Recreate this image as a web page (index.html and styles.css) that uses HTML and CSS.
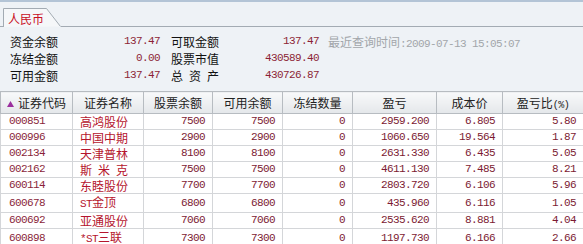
FILE: index.html
```html
<!DOCTYPE html>
<html lang="zh-CN">
<head>
<meta charset="utf-8">
<link rel="stylesheet" href="styles.css">
</head>
<body>
<div class="page">
  <div class="tabbar">
    <div class="tab-lead"></div>
    <div class="tab">
      <svg class="tab-shape" width="58" height="19" viewBox="0 0 58 19"><path d="M0.5 19 V0.5 H43.5 L57.5 18.5" fill="#f5f7f9" stroke="#a3abb3" stroke-width="1"/></svg>
      <span class="tab-label">人民币</span>
    </div>
    <div class="tab-fill"></div>
  </div>

  <div class="summary">
    <span class="lbl">资金余额</span><span class="val">137.47</span>
    <span class="lbl lbl2">可取金额</span><span class="val">137.47</span>
    <span class="qtime">最近查询时间<span class="num">:2009-07-13 15:05:07</span></span>

    <span class="lbl">冻结金额</span><span class="val">0.00</span>
    <span class="lbl lbl2">股票市值</span><span class="val">430589.40</span>
    <span></span>

    <span class="lbl">可用金额</span><span class="val">137.47</span>
    <span class="lbl lbl2"><span class="spread"><span>总</span><span>资</span><span>产</span></span></span><span class="val">430726.87</span>
    <span></span>
  </div>

  <table class="grid">
    <colgroup>
      <col class="c1"><col class="c2"><col class="c3"><col class="c4"><col class="c5"><col class="c6"><col class="c7"><col class="c8">
    </colgroup>
    <thead>
      <tr>
        <th><svg class="sort" width="7" height="6" viewBox="0 0 7 6"><path d="M3.5 0 L7 6 H0 Z" fill="#9b2f9e"/></svg>证券代码</th>
        <th>证券名称</th>
        <th>股票余额</th>
        <th>可用余额</th>
        <th>冻结数量</th>
        <th>盈亏</th>
        <th>成本价</th>
        <th>盈亏比<span class="pct">(%)</span></th>
      </tr>
    </thead>
    <tbody>
      <tr><td class="code">000851</td><td class="name">高鸿股份</td><td class="n">7500</td><td class="n">7500</td><td class="n">0</td><td class="n">2959.200</td><td class="n">6.805</td><td class="n">5.80</td></tr>
      <tr><td class="code">000996</td><td class="name">中国中期</td><td class="n">2900</td><td class="n">2900</td><td class="n">0</td><td class="n">1060.650</td><td class="n">19.564</td><td class="n">1.87</td></tr>
      <tr><td class="code">002134</td><td class="name">天津普林</td><td class="n">8100</td><td class="n">8100</td><td class="n">0</td><td class="n">2631.330</td><td class="n">6.435</td><td class="n">5.05</td></tr>
      <tr><td class="code">002162</td><td class="name"><span class="spread"><span>斯</span><span>米</span><span>克</span></span></td><td class="n">7500</td><td class="n">7500</td><td class="n">0</td><td class="n">4611.130</td><td class="n">7.485</td><td class="n">8.21</td></tr>
      <tr><td class="code">600114</td><td class="name">东睦股份</td><td class="n">7700</td><td class="n">7700</td><td class="n">0</td><td class="n">2803.720</td><td class="n">6.106</td><td class="n">5.96</td></tr>
      <tr><td class="code">600678</td><td class="name"><span class="st">ST</span>金顶</td><td class="n">6800</td><td class="n">6800</td><td class="n">0</td><td class="n">435.960</td><td class="n">6.116</td><td class="n">1.05</td></tr>
      <tr><td class="code">600692</td><td class="name">亚通股份</td><td class="n">7060</td><td class="n">7060</td><td class="n">0</td><td class="n">2535.620</td><td class="n">8.881</td><td class="n">4.04</td></tr>
      <tr><td class="code">600898</td><td class="name"><span class="st">*ST</span>三联</td><td class="n">7300</td><td class="n">7300</td><td class="n">0</td><td class="n">1197.730</td><td class="n">6.166</td><td class="n">2.66</td></tr>
    </tbody>
  </table>
</div>
</body>
</html>
```
FILE: styles.css
```css
html, body {
  margin: 0;
  padding: 0;
  background: #eef2f6;
  overflow: hidden;
}
.page {
  width: 583px;
  height: 244px;
  border-top: 2px solid #b3c4d6;
  box-sizing: border-box;
  font-family: "Noto Sans CJK SC", "Noto Sans", sans-serif;
  font-size: 12px;
  color: #111;
}
.tabbar {
  display: flex;
  margin-top: 6px;
  height: 19px;
}
.tab-lead {
  width: 3px;
  border-bottom: 1px solid #a3abb3;
}
.tab {
  display: grid;
  width: 58px;
  height: 19px;
}
.tab-shape, .tab-label {
  grid-area: 1 / 1;
}
.tab-shape { display: block; }
.tab-label {
  color: #c8101e;
  padding-left: 5px;
  line-height: 19px;
  padding-top: 1px;
}
.tab-fill {
  flex: 1;
  border-bottom: 1px solid #a3abb3;
}
.summary {
  display: grid;
  grid-template-columns: 48px 102px 61px 98px auto;
  grid-auto-rows: 17px;
  padding: 6px 0 0 10px;
  line-height: 17px;
}
.lbl { color: #111; white-space: nowrap; }
.lbl2 { padding-left: 11px; }
.spread {
  display: inline-flex;
  justify-content: space-between;
  width: 48px;
}
.val {
  text-align: right;
  color: #8c1f35;
  font-family: "Liberation Mono", monospace;
  font-size: 11px;
  letter-spacing: -0.6px;
}
.qtime {
  color: #a2a6aa;
  padding-left: 9px;
  white-space: nowrap;
}
.qtime .num {
  font-family: "Liberation Mono", monospace;
  font-size: 11px;
  letter-spacing: -0.6px;
}
.grid {
  margin-top: 7px;
  border-collapse: collapse;
  table-layout: fixed;
  width: 583px;
  background: #fff;
}
col.c1 { width: 72px; }
col.c2 { width: 71px; }
col.c3 { width: 69px; }
col.c4 { width: 70px; }
col.c5 { width: 70px; }
col.c6 { width: 84px; }
col.c7 { width: 66px; }
col.c8 { width: 81px; }
.grid th {
  height: 21px;
  padding: 0;
  font-weight: normal;
  color: #222;
  background: linear-gradient(#f8f9fa, #e4e7ea);
  border: 1px solid #b7bcc1;
  text-align: center;
  white-space: nowrap;
}
.sort { margin-right: 4px; vertical-align: 1px; }
.pct {
  font-family: "Liberation Mono", monospace;
  font-size: 10px;
  letter-spacing: -0.5px;
}
.grid td {
  height: 15px;
  padding: 0 7px 0 7px;
  border: 1px solid #d4d6d9;
  line-height: 15px;
  white-space: nowrap;
  overflow: hidden;
}
.grid td.code {
  padding-left: 8px;
  color: #8a1f3a;
  font-family: "Liberation Mono", monospace;
  font-size: 11px;
  letter-spacing: -0.6px;
}
.grid td.name {
  color: #b5152d;
}
.grid td.n {
  text-align: right;
  color: #7c1a32;
  font-family: "Liberation Mono", monospace;
  font-size: 11px;
  letter-spacing: -0.6px;
}
.st {
  font-family: "Liberation Mono", monospace;
  font-size: 11px;
  letter-spacing: -0.6px;
}
```
